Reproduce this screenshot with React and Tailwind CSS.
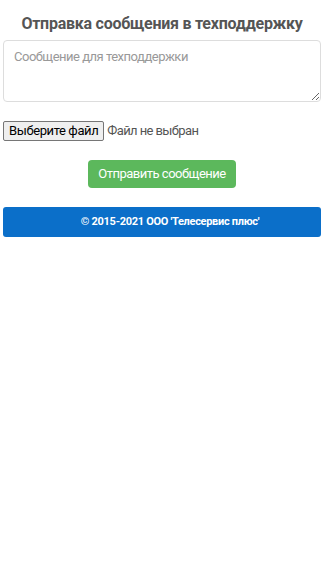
export default function App() {
  return (
    <div className="min-h-[576px] bg-white px-[3px] font-['Roboto',sans-serif]">
      <h1 className="pt-[12px] text-center text-[16px] font-bold leading-[24px] tracking-[-0.25px] text-[#555]">
        Отправка сообщения в техподдержку
      </h1>
      <textarea
        placeholder="Сообщение для техподдержки"
        className="mt-[4px] block h-[62px] w-full rounded-[4px] border border-[#ddd] px-[10px] py-[6px] text-[13px] leading-[20px] tracking-[-0.5px] text-[#555] placeholder:text-[#999]"
      />
      <div className="mt-[19px] flex items-center text-[13px] leading-[18px] tracking-[-0.4px]">
        <span className="rounded-[2px] border border-[#767676] bg-[#efefef] px-[5px] text-black">
          Выберите файл
        </span>
        <span className="ml-[3px] tracking-[-0.6px] text-[#555]">Файл не выбран</span>
      </div>
      <div className="mt-[19px] flex justify-center">
        <button className="h-[28px] w-[148px] rounded-[4px] bg-[#5cb85c] text-[13px] tracking-[-0.5px] text-white">
          Отправить сообщение
        </button>
      </div>
      <div className="mt-[19px] flex h-[30px] items-center justify-center rounded-[3px] bg-[#0b6fc9] pl-[16px] text-[11px] font-bold tracking-[-0.3px] text-white">
        © 2015-2021 ООО 'Телесервис плюс'
      </div>
    </div>
  )
}
